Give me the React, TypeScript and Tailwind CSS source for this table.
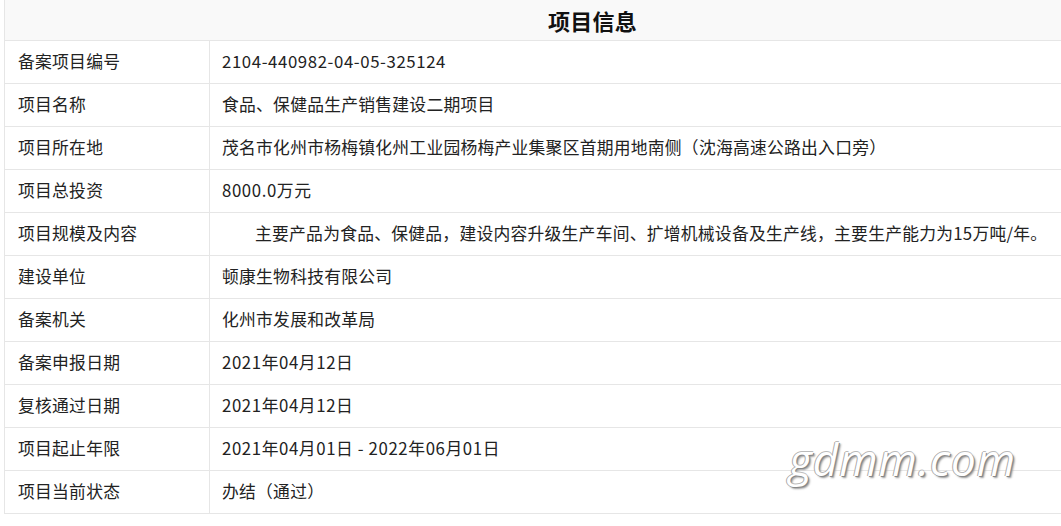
const rows: [string, string, boolean][] = [
  ['备案项目编号', '2104-440982-04-05-325124', true],
  ['项目名称', '食品、保健品生产销售建设二期项目', false],
  ['项目所在地', '茂名市化州市杨梅镇化州工业园杨梅产业集聚区首期用地南侧（沈海高速公路出入口旁）', false],
  ['项目总投资', '8000.0万元', true],
  ['项目规模及内容', '主要产品为食品、保健品，建设内容升级生产车间、扩增机械设备及生产线，主要生产能力为15万吨/年。', false],
  ['建设单位', '顿康生物科技有限公司', false],
  ['备案机关', '化州市发展和改革局', false],
  ['备案申报日期', '2021年04月12日', true],
  ['复核通过日期', '2021年04月12日', true],
  ['项目起止年限', '2021年04月01日 - 2022年06月01日', true],
  ['项目当前状态', '办结（通过）', false],
]

const App = () => {
  return (
    <div className="relative w-[1061px] h-[526px] overflow-hidden bg-white font-['Microsoft_YaHei','Noto_Sans_CJK_SC',sans-serif] text-[16.8px] tracking-[0.25px] text-[#222]">
      <div className="ml-[4px] w-[1176px] border-l border-[#e6e6e6]">
        <div className="h-[41px] bg-[#f9f9f9] border-b border-[#e6e6e6] flex items-center justify-center">
          <span className="text-[22px] font-bold text-[#111]">项目信息</span>
        </div>
        {rows.map(([label, value, digits], i) => (
          <div key={i} className="flex h-[43px] border-b border-[#e6e6e6]">
            <div className="w-[205px] shrink-0 border-r border-[#e6e6e6] pl-[13px] flex items-center">
              {label}
            </div>
            <div className={`flex-1 pl-[12px] flex items-center whitespace-nowrap ${digits ? 'tracking-[0.6px]' : ''}`}>
              {label === '项目规模及内容' ? <span className="pl-[33px]">{value}</span> : value}
            </div>
          </div>
        ))}
      </div>
      <div className="absolute left-[789px] top-[437px] italic text-[44px] leading-none tracking-[1px] text-white font-['Open_Sans',sans-serif] [text-shadow:1px_1px_0_#888,-1px_0_0_#aaa,0_-1px_0_#bbb,2px_2px_2px_#999]">
        gdmm.com
      </div>
    </div>
  )
}

export default App
